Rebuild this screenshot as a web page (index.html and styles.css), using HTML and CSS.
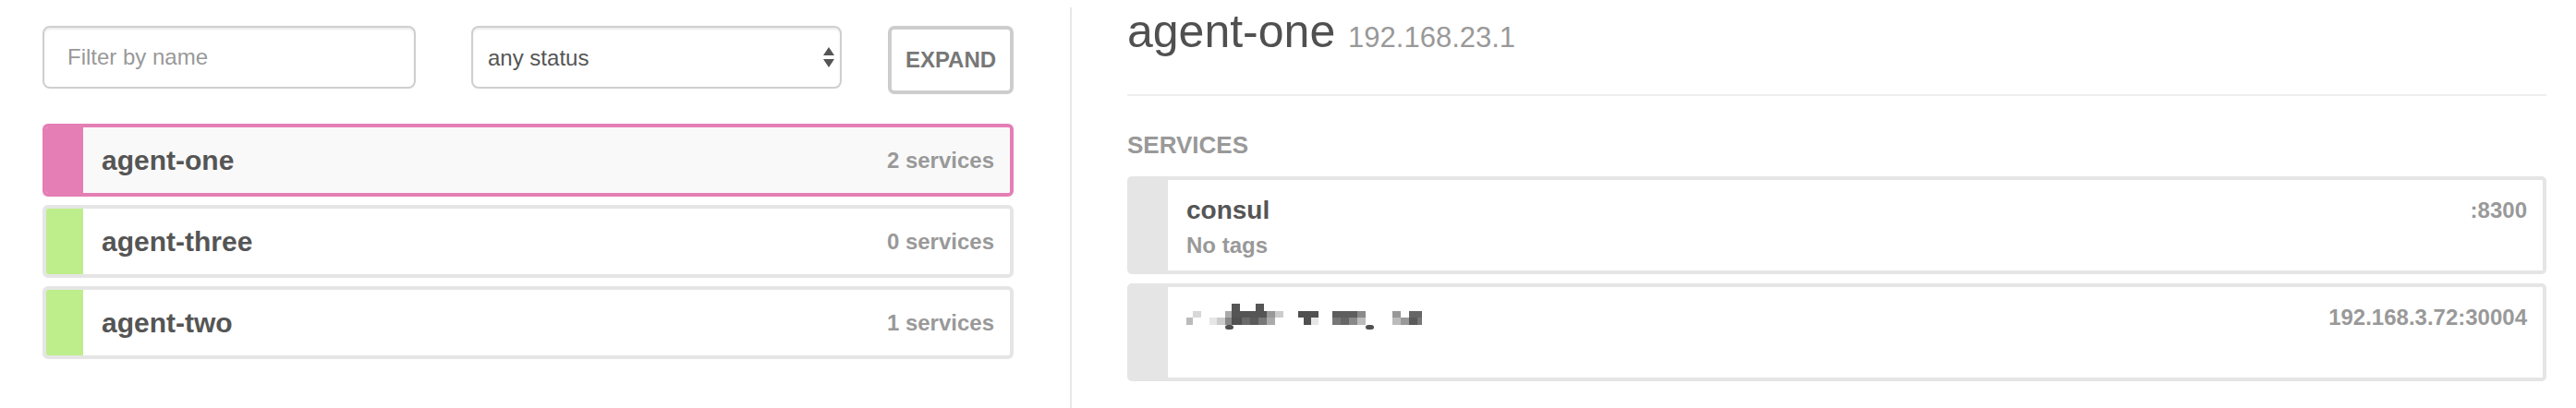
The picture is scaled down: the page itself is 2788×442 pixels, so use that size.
FILE: index.html
```html
<!DOCTYPE html>
<html lang="en">
<head>
<meta charset="utf-8">
<title>Nodes</title>
<link rel="stylesheet" href="styles.css">
</head>
<body>
<div class="page">
  <aside class="sidebar">
    <div class="toolbar">
      <input class="field filter" type="text" placeholder="Filter by name">
      <div class="select-wrap">
        <select class="field status">
          <option>any status</option>
        </select>
        <svg class="arrows" width="12" height="22" viewBox="0 0 12 22"><path d="M6 0 L12 9 L0 9 Z M0 13 L12 13 L6 22 Z" fill="#555"/></svg>
      </div>
      <button class="expand">EXPAND</button>
    </div>
    <ul class="nodes">
      <li class="node active critical"><span class="bar"></span><span class="node-body"><span class="name">agent-one</span><span class="count">2 services</span></span></li>
      <li class="node passing"><span class="bar"></span><span class="node-body"><span class="name">agent-three</span><span class="count">0 services</span></span></li>
      <li class="node passing"><span class="bar"></span><span class="node-body"><span class="name">agent-two</span><span class="count">1 services</span></span></li>
    </ul>
  </aside>
  <main class="detail">
    <h2 class="title">agent-one <small class="addr">192.168.23.1</small></h2>
    <hr class="rule">
    <h4 class="section">SERVICES</h4>
    <div class="service">
      <span class="sbar"></span>
      <div class="service-body">
        <div class="line1"><span class="sname">consul</span><span class="port">:8300</span></div>
        <div class="line2">No tags</div>
      </div>
    </div>
    <div class="service">
      <span class="sbar"></span>
      <div class="service-body">
        <div class="line1">
          <svg class="redacted" width="260" height="30" viewBox="0 0 260 30" aria-label="redacted service name">
            <rect x="49" y="0" width="9" height="8" fill="#555"/>
            <rect x="75" y="0" width="9" height="8" fill="#555"/>
            <rect x="7" y="8" width="9" height="7" fill="#d8d8d8"/>
            <rect x="42" y="8" width="7" height="7" fill="#aaa"/>
            <rect x="49" y="8" width="38" height="7" fill="#555"/>
            <rect x="87" y="8" width="9" height="7" fill="#999"/>
            <rect x="96" y="8" width="9" height="7" fill="#ccc"/>
            <rect x="121" y="8" width="22" height="7" fill="#505050"/>
            <rect x="158" y="8" width="27" height="7" fill="#5e5e5e"/>
            <rect x="185" y="8" width="9" height="7" fill="#8a8a8a"/>
            <rect x="223" y="8" width="9" height="7" fill="#999"/>
            <rect x="241" y="8" width="14" height="7" fill="#666"/>
            <rect x="0" y="15" width="7" height="8" fill="#bbb"/>
            <rect x="25" y="15" width="8" height="8" fill="#e6e6e6"/>
            <rect x="33" y="15" width="9" height="8" fill="#ccc"/>
            <rect x="42" y="15" width="7" height="8" fill="#888"/>
            <rect x="49" y="15" width="11" height="8" fill="#505050"/>
            <rect x="60" y="15" width="9" height="8" fill="#6a6a6a"/>
            <rect x="69" y="15" width="9" height="8" fill="#5a5a5a"/>
            <rect x="78" y="15" width="9" height="8" fill="#777"/>
            <rect x="87" y="15" width="9" height="8" fill="#aaa"/>
            <rect x="127" y="15" width="8" height="8" fill="#505050"/>
            <rect x="135" y="15" width="8" height="8" fill="#e6e6e6"/>
            <rect x="158" y="15" width="9" height="8" fill="#777"/>
            <rect x="167" y="15" width="9" height="8" fill="#666"/>
            <rect x="176" y="15" width="9" height="8" fill="#888"/>
            <rect x="185" y="15" width="9" height="8" fill="#bbb"/>
            <rect x="223" y="15" width="9" height="8" fill="#bbb"/>
            <rect x="232" y="15" width="9" height="8" fill="#999"/>
            <rect x="241" y="15" width="9" height="8" fill="#5a5a5a"/>
            <rect x="250" y="15" width="5" height="8" fill="#777"/>
            <rect x="42" y="23" width="9" height="5" rx="3" fill="#505050"/>
            <rect x="194" y="23" width="9" height="5" rx="3" fill="#505050"/>
          </svg>
          <span class="port">192.168.3.72:30004</span>
        </div>
        <div class="line2"></div>
      </div>
    </div>
    <h4 class="section next">CHECKS</h4>
  </main>
</div>
</body>
</html>
```
FILE: styles.css
```css
* { box-sizing: border-box; }
html, body { margin: 0; padding: 0; background: #fff; }
body {
  font-family: "Liberation Sans", Arial, Helvetica, sans-serif;
  color: #555;
  height: 442px;
  overflow: hidden;
}
.page { display: flex; align-items: stretch; height: 442px; }

.sidebar {
  width: 1160px;
  flex: 0 0 1160px;
  margin-top: 8px;
  padding: 20px 61px 0 46px;
  border-right: 2px solid #e8e8e8;
}
.toolbar { display: flex; align-items: flex-start; }
.field {
  height: 68px;
  border: 2px solid #cfcfcf;
  border-radius: 8px;
  box-shadow: inset 0 2px 2px rgba(0,0,0,0.075);
  background: #fff;
  font-family: inherit;
  font-size: 24px;
  color: #555;
  outline: none;
}
.filter { width: 404px; padding: 0 25px; }
.filter::placeholder { color: #999; }
.select-wrap { position: relative; margin-left: 60px; width: 401px; }
.status {
  width: 401px;
  padding: 0 16px;
  appearance: none;
  -webkit-appearance: none;
}
.arrows { position: absolute; left: 381px; top: 23px; }
.expand {
  margin-left: 50px;
  width: 136px;
  height: 74px;
  border: 4px solid #cdcdcd;
  border-radius: 7px;
  background: #fff;
  font-family: inherit;
  font-weight: bold;
  font-size: 24px;
  color: #777;
  padding: 0;
}

.nodes { list-style: none; margin: 32px 0 0; padding: 0; }
.node {
  display: flex;
  height: 79px;
  margin-bottom: 9px;
  border: 4px solid #e5e5e5;
  border-radius: 6px;
  overflow: hidden;
}
.node .bar { width: 40px; flex: 0 0 40px; }
.node.passing .bar { background: #bdee8b; }
.node.critical .bar { background: #e47eb4; }
.node.active { border-color: #e47eb4; }
.node.active .node-body { background: #f9f9f9; }
.node-body {
  flex: 1;
  display: flex;
  align-items: center;
  justify-content: space-between;
  padding: 0 17px 0 20px;
}
.name { font-size: 30px; font-weight: bold; color: #555; }
.count { font-size: 24px; font-weight: bold; color: #999; }

.detail {
  flex: 1;
  padding: 4px 32px 0 60px;
}
.title {
  margin: 0;
  font-size: 50px;
  line-height: 60px;
  font-weight: normal;
  color: #505050;
}
.addr { font-size: 31px; color: #999; }
.rule {
  margin: 31px 0 0;
  border: 0;
  height: 2px;
  background: #eee;
}
.section {
  margin: 37px 0 18px;
  font-size: 26px;
  line-height: 32px;
  font-weight: bold;
  color: #999;
}
.section.next { margin-top: 22px; }
.service {
  display: flex;
  height: 106px;
  margin-bottom: 10px;
  border: 4px solid #e5e5e5;
  border-radius: 5px;
}
.sbar { width: 40px; flex: 0 0 40px; background: #e5e5e5; }
.service-body { flex: 1; padding: 15px 17px 0 20px; }
.line1 {
  display: flex;
  align-items: center;
  justify-content: space-between;
  height: 36px;
}
.sname { font-size: 28px; font-weight: bold; color: #555; }
.port { font-size: 24px; font-weight: bold; color: #999; }
.line2 { height: 40px; line-height: 40px; font-size: 24px; font-weight: bold; color: #999; }
.redacted { display: block; }
```
